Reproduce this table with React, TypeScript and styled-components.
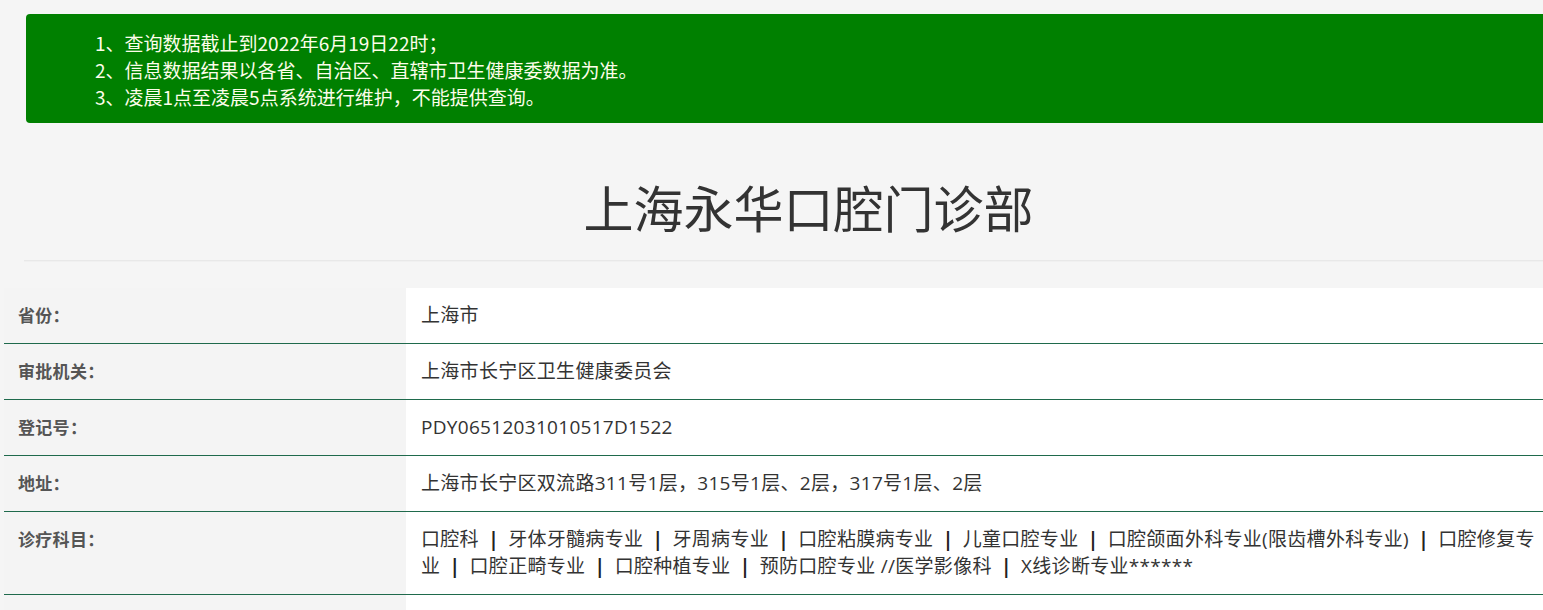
import React from "react";
import styled, { createGlobalStyle } from "styled-components";

const GlobalStyle = createGlobalStyle`
  html, body {
    margin: 0;
    padding: 0;
    background: #f5f5f5;
    overflow: hidden;
  }
  body {
    font-family: "Open Sans", "Noto Sans CJK SC", sans-serif;
  }
`;

const Page = styled.div`
  width: 1620px;
  padding: 14px 0 0 4px;
  box-sizing: border-box;
`;

const Notice = styled.div`
  margin-left: 22px;
  width: 1567px;
  background: #008000;
  border-radius: 4px;
  padding: 15px 0 13px 69px;
  box-sizing: border-box;
  color: #fdfdea;
  font-family: "Noto Sans CJK SC", sans-serif;
  font-size: 19px;
  line-height: 27px;
`;

const NoticeLine = styled.div`
  white-space: nowrap;
`;

const TitleBlock = styled.div`
  margin-left: 20px;
  width: 1569px;
  padding: 50px 0 21px;
  border-bottom: 1px solid #e8e8e8;
  box-shadow: 0 1px 0 #f0f0f0;
  text-align: center;
`;

const Title = styled.h1`
  margin: 0;
  font-family: "Noto Sans CJK SC", sans-serif;
  font-weight: 400;
  font-size: 50px;
  line-height: 66px;
  color: #333;
`;

const Table = styled.div`
  margin-top: 27px;
  width: 1556px;
`;

const Row = styled.div<{ $last?: boolean }>`
  display: grid;
  grid-template-columns: 402px 1fr;
  border-bottom: ${(p) => (p.$last ? "none" : "1px solid #1f6a4c")};
`;

const Label = styled.div`
  background: #f4f4f4;
  padding: 14px 14px;
  font-size: 17px;
  font-weight: 700;
  line-height: 27px;
  letter-spacing: 0.3px;
  color: #555;
  min-height: 27px;
`;

const Value = styled.div`
  background: #fff;
  padding: 14px 15px;
  font-size: 19px;
  line-height: 27px;
  letter-spacing: 0.3px;
  color: #333;
  min-height: 27px;
`;

const Sep = styled.span`
  color: #222;
  font-weight: 700;
  margin: 0 4px;
`;

const notices = [
  "1、查询数据截止到2022年6月19日22时；",
  "2、信息数据结果以各省、自治区、直辖市卫生健康委数据为准。",
  "3、凌晨1点至凌晨5点系统进行维护，不能提供查询。",
];

const subjects = [
  "口腔科",
  "牙体牙髓病专业",
  "牙周病专业",
  "口腔粘膜病专业",
  "儿童口腔专业",
  "口腔颌面外科专业(限齿槽外科专业)",
  "口腔修复专业",
  "口腔正畸专业",
  "口腔种植专业",
  "预防口腔专业 //医学影像科",
  "X线诊断专业******",
];

const rows: { label: string; value: React.ReactNode }[] = [
  { label: "省份：", value: "上海市" },
  { label: "审批机关：", value: "上海市长宁区卫生健康委员会" },
  { label: "登记号：", value: "PDY06512031010517D1522" },
  { label: "地址：", value: "上海市长宁区双流路311号1层，315号1层、2层，317号1层、2层" },
  {
    label: "诊疗科目：",
    value: subjects.map((s, i) => (
      <React.Fragment key={i}>
        {i > 0 && <Sep> | </Sep>}
        {s}
      </React.Fragment>
    )),
  },
];

export default function App() {
  return (
    <>
      <GlobalStyle />
      <Page>
        <Notice>
          {notices.map((n) => (
            <NoticeLine key={n}>{n}</NoticeLine>
          ))}
        </Notice>
        <TitleBlock>
          <Title>上海永华口腔门诊部</Title>
        </TitleBlock>
        <Table>
          {rows.map((r) => (
            <Row key={r.label}>
              <Label>{r.label}</Label>
              <Value>{r.value}</Value>
            </Row>
          ))}
          <Row $last>
            <Label />
            <Value />
          </Row>
        </Table>
      </Page>
    </>
  );
}
